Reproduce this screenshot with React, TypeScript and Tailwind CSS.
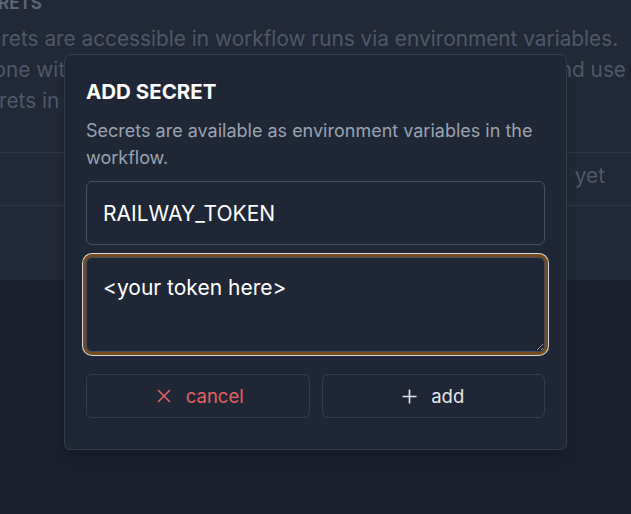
import React from "react";

export default function App() {
  return (
    <div
      className="relative w-[631px] h-[514px] overflow-hidden bg-[#1a202c]"
      style={{ fontFamily: "Inter, 'Noto Sans', sans-serif" }}
    >
      {/* background page */}
      <div className="h-[280px] bg-[#212837] overflow-hidden">
        <div className="-ml-[36px] w-[667px]">
          <h2 className="-mt-[11px] text-[17px] leading-[28px] font-bold text-[#5b6475]">
            SECRETS
          </h2>
          <div className="mt-[6px] text-[20.8px] leading-[31px] text-[#4f5868] whitespace-nowrap">
            <div>Secrets are accessible in workflow runs via environment variables.</div>
            <div className="-ml-[8px] w-[670px] flex justify-between">
              <span>Anyone with access to this workflow</span>
              <span>can view, edit and use</span>
            </div>
            <div>secrets in workflow steps.</div>
          </div>
          <div className="mt-[36px] h-[54px] border-y border-[#2e3646] flex items-center justify-end gap-[14px] pr-[26px] pb-[6px] text-[20.8px] text-[#4f5868] whitespace-nowrap">
            <span>No secrets have been added</span>
            <span>yet</span>
          </div>
        </div>
      </div>

      {/* modal */}
      <div className="absolute left-[64px] top-[54px] w-[503px] rounded-md border border-[#333c4b] bg-[#1f2736] px-[21px] pt-[23px] pb-[31px] shadow-lg">
        <h3 className="text-[20.5px] leading-[28px] font-bold text-white">ADD SECRET</h3>
        <p className="mt-[11px] text-[18px] leading-[27px] text-[#9aa3b1]">
          Secrets are available as environment variables in the workflow.
        </p>
        <input
          defaultValue="RAILWAY_TOKEN"
          className="mt-[10px] block w-full h-[64px] rounded-md border border-[#454e5e] bg-[#1f2736] px-[16px] text-[21px] text-white outline-none"
        />
        <textarea
          defaultValue="<your token here>"
          className="mt-[12px] block w-full h-[95px] rounded-md border border-[#454e5e] bg-[#1f2736] px-[16px] pt-[16px] text-[21px] leading-[28px] text-white outline-none shadow-[0_0_0_3px_#774a1c,0_0_0_4px_#d4d8de]"
        />
        <div className="mt-[22px] flex gap-[12px]">
          <button className="flex-1 h-[44px] rounded-md border border-[#343d4c] bg-[#1f2736] flex items-center justify-center text-[18.5px] text-[#e46262]">
            <span className="flex items-center gap-[15px] pl-[5px]">
              <svg width="14" height="14" viewBox="0 0 14 14" fill="none" stroke="currentColor" strokeWidth="1.6">
                <path d="M1 1 L13 13 M13 1 L1 13" />
              </svg>
              <span className="mt-[1px]">cancel</span>
            </span>
          </button>
          <button className="flex-1 h-[44px] rounded-md border border-[#343d4c] bg-[#1f2736] flex items-center justify-center text-[18.5px] text-[#e5e7eb]">
            <span className="flex items-center gap-[14px]">
              <svg width="15" height="15" viewBox="0 0 15 15" fill="none" stroke="currentColor" strokeWidth="1.6">
                <path d="M7.5 0.5 V14.5 M0.5 7.5 H14.5" />
              </svg>
              <span className="mt-[1px]">add</span>
            </span>
          </button>
        </div>
      </div>
    </div>
  );
}
